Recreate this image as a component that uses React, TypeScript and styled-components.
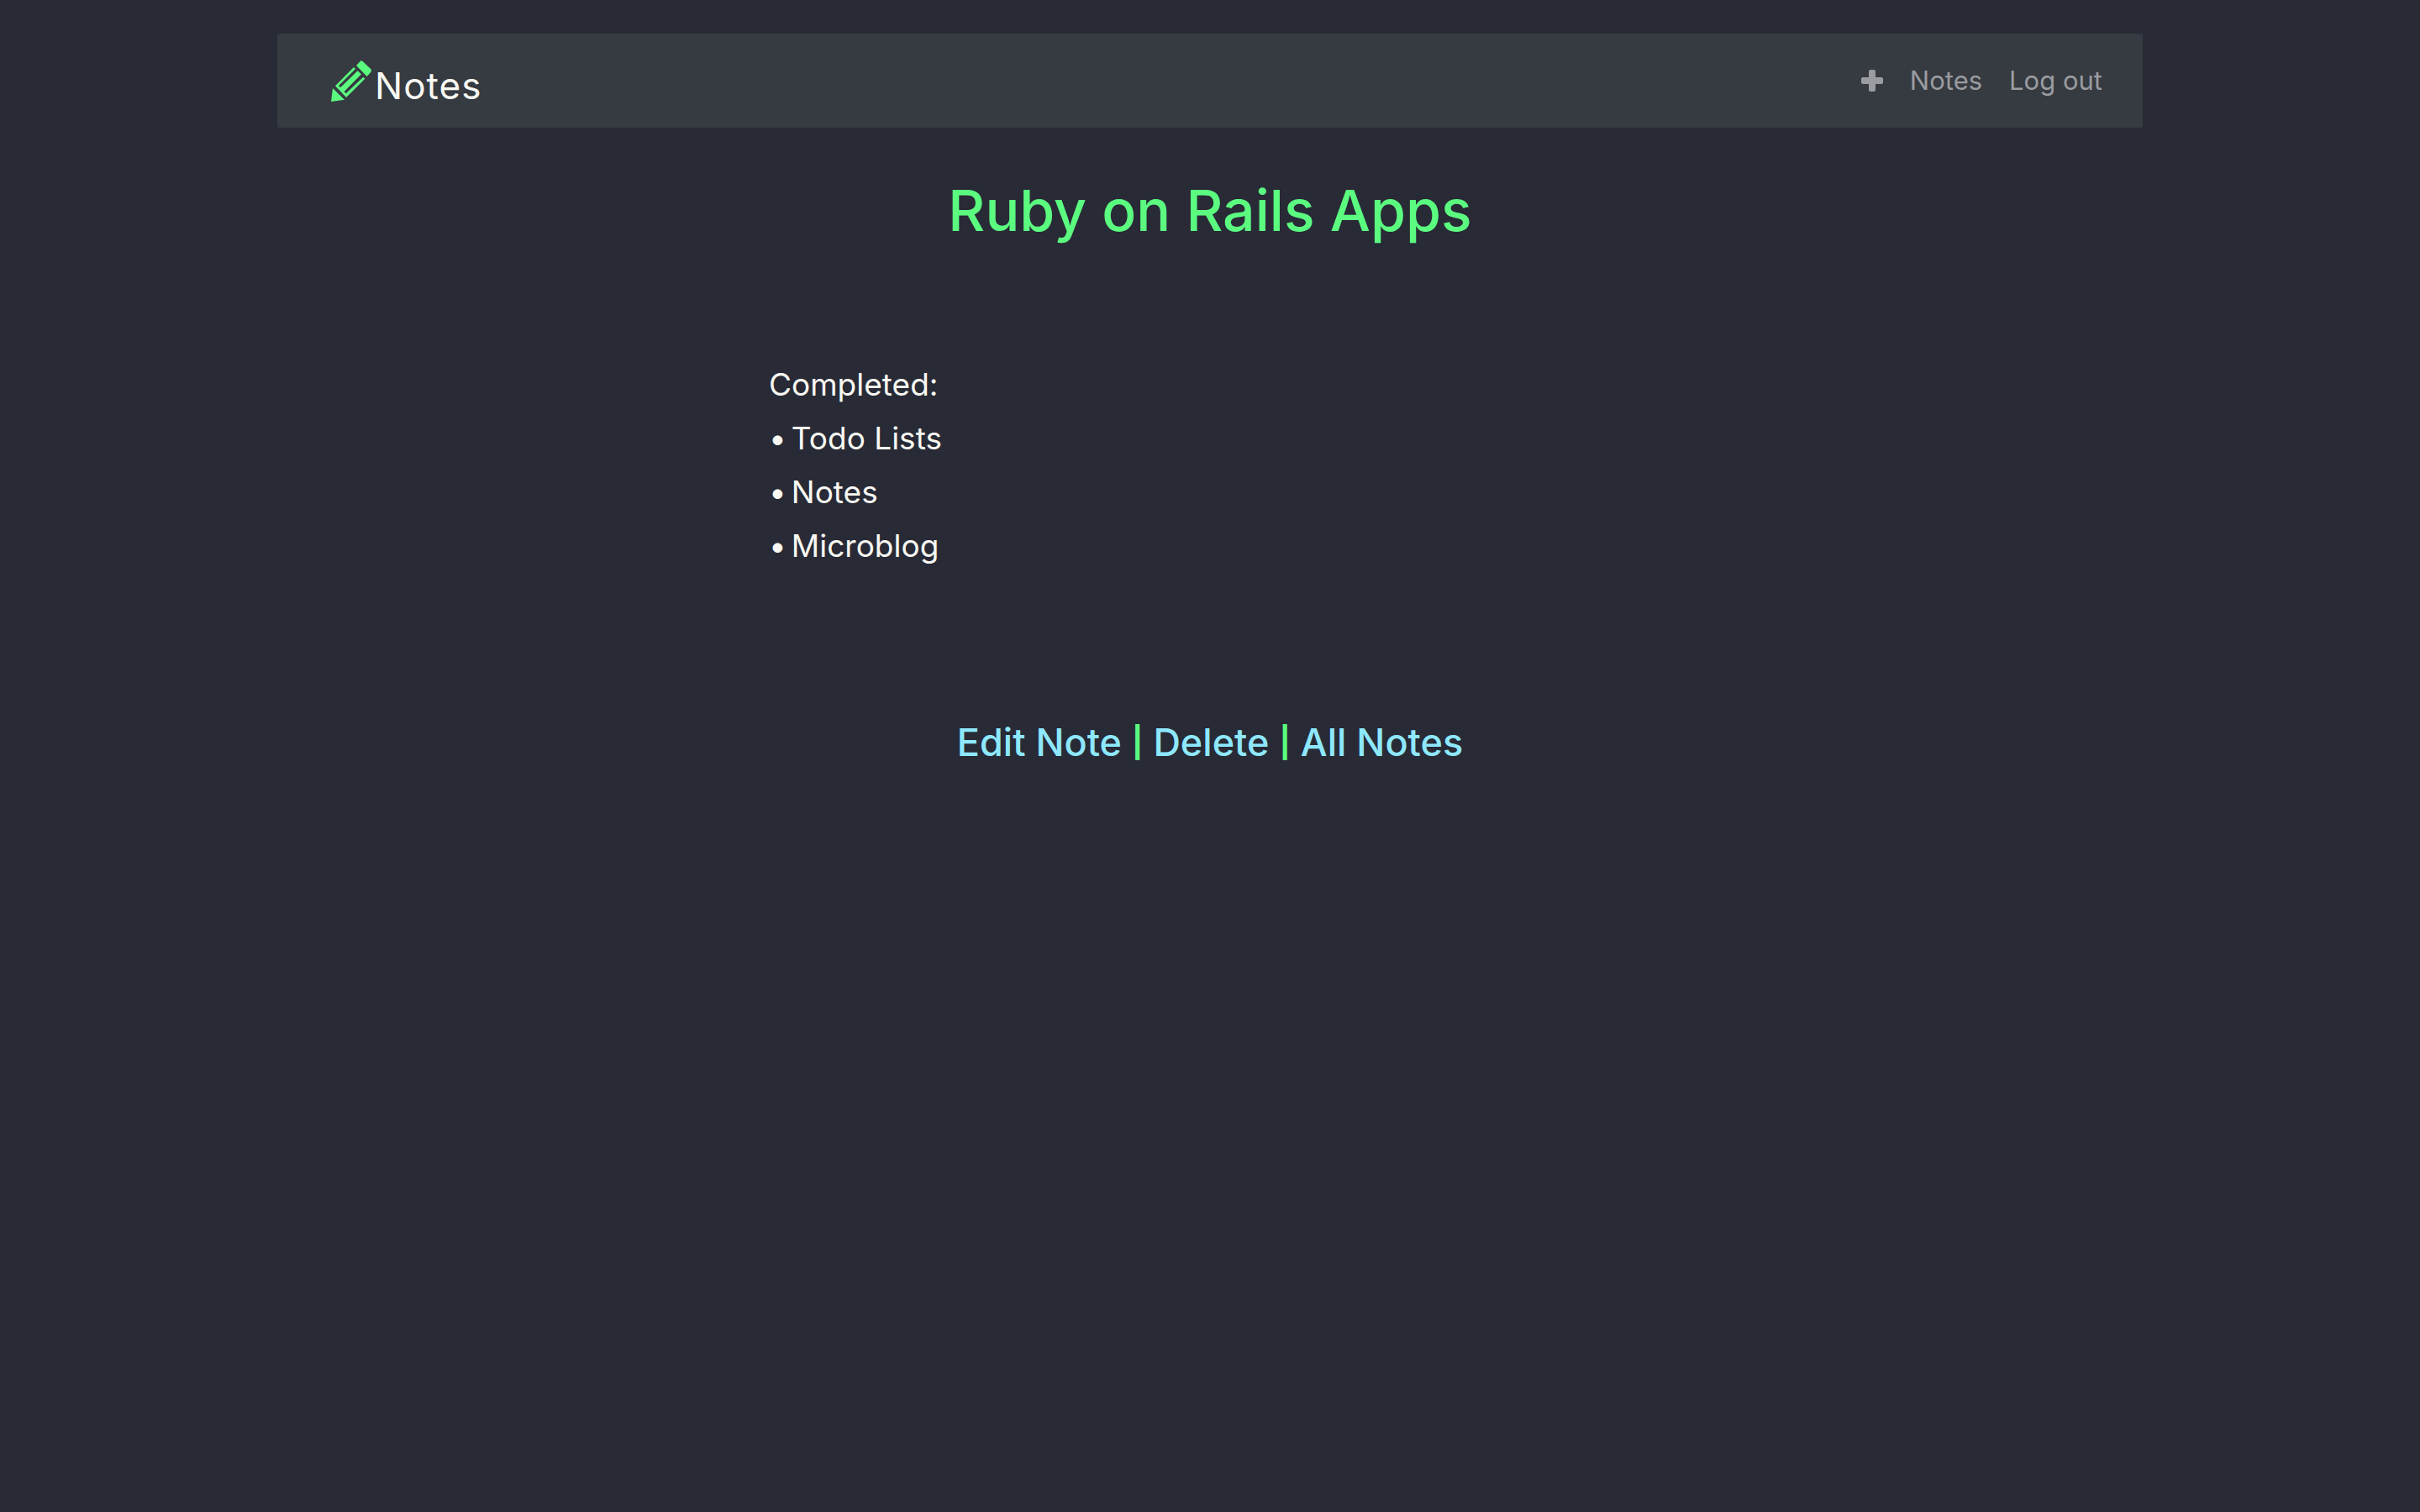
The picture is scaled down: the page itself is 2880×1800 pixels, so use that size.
import React from "react";
import styled, { createGlobalStyle } from "styled-components";

const colors = {
  background: "#282a36",
  bar: "#363a41",
  foreground: "#f8f8f2",
  green: "#5bfb80",
  cyan: "#8ee8fd",
  muted: "#9a9c9f",
};

const GlobalStyle = createGlobalStyle`
  * {
    box-sizing: border-box;
  }

  body {
    margin: 0;
    background: ${colors.background};
    color: ${colors.foreground};
    font-family: Inter, "Liberation Sans", sans-serif;
    font-size: 37px;
    line-height: 64px;
  }
`;

const Container = styled.div`
  max-width: 2220px;
  margin: 0 auto;
  padding-top: 40px;
`;

const Navbar = styled.header`
  display: flex;
  align-items: center;
  justify-content: space-between;
  padding: 18px 48px 18px 64px;
  border-radius: 2px;
  background: ${colors.bar};
`;

const Brand = styled.a`
  display: flex;
  align-items: center;
  gap: 4px;
  color: ${colors.foreground};
  font-size: 44px;
  line-height: 64px;
  letter-spacing: 1px;
  text-decoration: none;
`;

const BrandName = styled.span`
  padding-top: 12px;
`;

const PencilIcon = styled.svg`
  width: 48px;
  height: 49px;
  fill: ${colors.green};
`;

const NavLinks = styled.nav`
  display: flex;
  align-items: center;
  gap: 32px;
`;

const NavLink = styled.a`
  display: flex;
  align-items: center;
  color: ${colors.muted};
  font-size: 31px;
  line-height: 48px;
  text-decoration: none;
`;

const PlusIcon = styled.svg`
  width: 26px;
  height: 26px;
  fill: currentColor;
`;

const Title = styled.h1`
  margin: 54px 0 0;
  color: ${colors.green};
  font-size: 68px;
  font-weight: 500;
  line-height: 88px;
  text-align: center;
`;

const Note = styled.article`
  width: 1050px;
  max-width: 100%;
  margin: 132px auto 0;
`;

const NoteText = styled.p`
  display: flex;
  gap: 6px;
  margin: 0;
`;

const Actions = styled.nav`
  display: flex;
  justify-content: center;
  align-items: center;
  gap: 12px;
  margin-top: 174px;
  font-size: 45px;
  font-weight: 500;
  line-height: 56px;
`;

const Separator = styled.span`
  color: ${colors.green};
  font-size: 36px;
  font-weight: 700;
`;

const ActionLink = styled.a`
  color: ${colors.cyan};
  text-decoration: none;
`;

const completed = ["Todo Lists", "Notes", "Microblog"];
const actions = ["Edit Note", "Delete", "All Notes"];

function Pencil() {
  return (
    <PencilIcon viewBox="222 123 144 147" aria-hidden="true">
      <path d="M222 270 L228 222 L270 263 Z" />
      <path d="M312 141 L326 126 Q330 122 335 126 L364 154 Q368 159 364 164 L350 180 Z" />
      <path
        fillRule="evenodd"
        d="M237 214 L303 147 L309 153 L249 213 L255 220 L317 160 L330 172 L269 234 L275 241 L337 182 L343 188 L276 255 Z"
      />
    </PencilIcon>
  );
}

function Plus() {
  return (
    <PlusIcon viewBox="0 0 26 26" aria-hidden="true">
      <rect x="9" y="0" width="8" height="26" rx="2" />
      <rect x="0" y="9" width="26" height="8" rx="2" />
    </PlusIcon>
  );
}

export default function App() {
  return (
    <>
      <GlobalStyle />
      <Container>
        <Navbar>
          <Brand href="#">
            <Pencil />
            <BrandName>Notes</BrandName>
          </Brand>
          <NavLinks>
            <NavLink href="#" aria-label="New note">
              <Plus />
            </NavLink>
            <NavLink href="#">Notes</NavLink>
            <NavLink href="#">Log out</NavLink>
          </NavLinks>
        </Navbar>
        <main>
          <Title>Ruby on Rails Apps</Title>
          <Note>
            <NoteText>Completed:</NoteText>
            {completed.map((name) => (
              <NoteText key={name}>
                <span>•</span>
                <span>{name}</span>
              </NoteText>
            ))}
          </Note>
          <Actions>
            {actions.map((label, index) => (
              <React.Fragment key={label}>
                {index > 0 && <Separator>|</Separator>}
                <ActionLink href="#">{label}</ActionLink>
              </React.Fragment>
            ))}
          </Actions>
        </main>
      </Container>
    </>
  );
}
